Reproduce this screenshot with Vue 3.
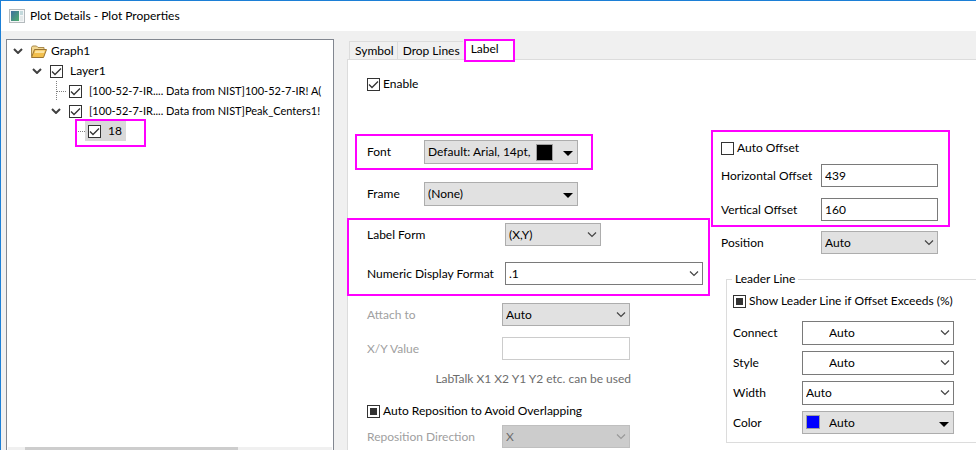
<script setup>
import { ref, onMounted } from 'vue'

const tree = ref([
  { level: 0, label: 'Graph1', open: true, folder: true },
  { level: 1, label: 'Layer1', open: true, checked: true },
  { level: 2, label: '[100-52-7-IR.... Data from NIST]100-52-7-IR! A(', checked: true, branch: true },
  { level: 2, label: '[100-52-7-IR.... Data from NIST]Peak_Centers1!', open: true, checked: true },
  { level: 3, label: '18', checked: true, selected: true },
])

const enabled = ref(true)
const autoOffset = ref(false)
const horizontal = ref('439')
const vertical = ref('160')
const reposition = ref(null)
const leader = ref(null)

onMounted(() => {
  reposition.value.indeterminate = true
  leader.value.indeterminate = true
})
</script>

<template>
  <div class="window">
    <header class="titlebar">
      <svg class="app-icon" width="16" height="14" viewBox="0 0 16 14" aria-hidden="true">
        <defs>
          <linearGradient id="screen" x1="0" y1="0" x2="1" y2="1">
            <stop offset="0" stop-color="#3f6fa0" />
            <stop offset="1" stop-color="#4fae6c" />
          </linearGradient>
        </defs>
        <rect x="0.5" y="0.5" width="15" height="13" fill="#f4f6f7" stroke="#b4babd" />
        <rect x="2" y="2" width="8" height="10" fill="url(#screen)" />
        <rect x="11" y="2" width="3" height="4" fill="#c3d9dc" />
        <rect x="11" y="7" width="3" height="5" fill="#e4e9ea" />
      </svg>
      <h1>Plot Details - Plot Properties</h1>
    </header>

    <main class="body">
      <nav class="tree" aria-label="Plot tree">
        <ul>
          <li
            v-for="(node, i) in tree"
            :key="i"
            class="node"
            :class="['level-' + node.level, { branch: node.branch }]"
          >
            <span class="twisty">
              <button v-if="node.open" type="button" :aria-label="'Collapse ' + node.label">
                <svg width="10" height="6" viewBox="0 0 10 6"><path d="M1 1l4 4 4-4" fill="none" stroke="#404040" stroke-width="2" /></svg>
              </button>
            </span>
            <label class="entry" :class="{ selected: node.selected }">
              <span class="mark">
                <svg v-if="node.folder" width="16" height="13" viewBox="0 0 16 13" aria-hidden="true">
                  <path d="M.5 11.5V2.5l1-1.5h4l1.500 1.500h6V5" fill="#f3d790" stroke="#a98a4c" />
                  <path d="M.5 12.500L3.500 4.500H15.500L12.500 12.500z" fill="#f2bf4c" stroke="#9a7431" />
                  <path d="M4.500 5.500h9.500l-1 2.500H3.700z" fill="#fbe3a0" />
                </svg>
                <input v-else v-model="node.checked" type="checkbox" class="check" />
              </span>
              <span class="name">{{ node.label }}</span>
            </label>
            <span v-if="node.selected" class="callout"></span>
          </li>
        </ul>
        <div class="scroll"><span class="thumb"></span></div>
      </nav>

      <section class="pane">
        <div class="tabs" role="tablist">
          <button type="button" role="tab">Symbol</button>
          <button type="button" role="tab">Drop Lines</button>
          <button type="button" role="tab" class="active marked" aria-selected="true">Label</button>
        </div>

        <div class="sheet">
          <div class="column main">
            <label class="tick enable"><input v-model="enabled" type="checkbox" class="check" />Enable</label>

            <div class="group marked font-group">
              <div class="row">
                <label for="font">Font</label>
                <div class="combo button tall">
                  <select id="font"><option>Default: Arial, 14pt,</option></select>
                  <span class="swatch black"></span>
                  <svg class="arrow" width="10" height="5" viewBox="0 0 10 5"><path d="M0 0h10L5 5z" /></svg>
                </div>
              </div>
            </div>

            <div class="row frame-row">
              <label for="frame">Frame</label>
              <div class="combo button tall">
                <select id="frame"><option>(None)</option></select>
                <svg class="arrow" width="10" height="5" viewBox="0 0 10 5"><path d="M0 0h10L5 5z" /></svg>
              </div>
            </div>

            <div class="group marked form-group">
              <div class="row">
                <label for="form">Label Form</label>
                <div class="combo button short">
                  <select id="form"><option>(X,Y)</option></select>
                  <svg class="chevron" width="10" height="6" viewBox="0 0 10 6"><path d="M1 .5l4 4 4-4" /></svg>
                </div>
              </div>
              <div class="row">
                <label for="format">Numeric Display Format</label>
                <div class="combo wide">
                  <select id="format"><option>.1</option></select>
                  <svg class="chevron" width="10" height="6" viewBox="0 0 10 6"><path d="M1 .5l4 4 4-4" /></svg>
                </div>
              </div>
            </div>

            <div class="attach">
              <div class="row">
                <label for="attach" class="dim">Attach to</label>
                <div class="combo button">
                  <select id="attach"><option>Auto</option></select>
                  <svg class="chevron" width="10" height="6" viewBox="0 0 10 6"><path d="M1 .5l4 4 4-4" /></svg>
                </div>
              </div>
              <div class="row">
                <label for="xy" class="dim">X/Y Value</label>
                <input id="xy" type="text" class="text" disabled />
              </div>
              <p class="hint">LabTalk X1 X2 Y1 Y2 etc. can be used</p>
            </div>

            <label class="tick"><input ref="reposition" type="checkbox" class="check" />Auto Reposition to Avoid Overlapping</label>
            <div class="row direction">
              <label for="direction" class="dim">Reposition Direction</label>
              <div class="combo button off">
                <select id="direction" disabled><option>X</option></select>
                <svg class="chevron" width="10" height="6" viewBox="0 0 10 6"><path d="M1 .5l4 4 4-4" /></svg>
              </div>
            </div>
          </div>

          <div class="column side">
            <div class="group marked offset-group">
              <label class="tick"><input v-model="autoOffset" type="checkbox" class="check" />Auto Offset</label>
              <div class="row">
                <label for="horizontal">Horizontal Offset</label>
                <input id="horizontal" v-model="horizontal" type="text" class="text" />
              </div>
              <div class="row">
                <label for="vertical">Vertical Offset</label>
                <input id="vertical" v-model="vertical" type="text" class="text" />
              </div>
            </div>

            <div class="row position">
              <label for="position">Position</label>
              <div class="combo button">
                <select id="position"><option>Auto</option></select>
                <svg class="chevron" width="10" height="6" viewBox="0 0 10 6"><path d="M1 .5l4 4 4-4" /></svg>
              </div>
            </div>

            <fieldset class="leader">
              <legend>Leader Line</legend>
              <label class="tick"><input ref="leader" type="checkbox" class="check" />Show Leader Line if Offset Exceeds (%)</label>
              <div class="row">
                <label for="connect">Connect</label>
                <div class="combo tall inset">
                  <select id="connect"><option>Auto</option></select>
                  <svg class="chevron" width="10" height="6" viewBox="0 0 10 6"><path d="M1 .5l4 4 4-4" /></svg>
                </div>
              </div>
              <div class="row">
                <label for="style">Style</label>
                <div class="combo tall inset">
                  <select id="style"><option>Auto</option></select>
                  <svg class="chevron" width="10" height="6" viewBox="0 0 10 6"><path d="M1 .5l4 4 4-4" /></svg>
                </div>
              </div>
              <div class="row">
                <label for="width">Width</label>
                <div class="combo tall">
                  <select id="width"><option>Auto</option></select>
                  <svg class="chevron" width="10" height="6" viewBox="0 0 10 6"><path d="M1 .5l4 4 4-4" /></svg>
                </div>
              </div>
              <div class="row">
                <label for="color">Color</label>
                <div class="combo button inset">
                  <select id="color"><option>Auto</option></select>
                  <span class="swatch blue"></span>
                  <svg class="arrow" width="10" height="5" viewBox="0 0 10 5"><path d="M0 0h10L5 5z" /></svg>
                </div>
              </div>
            </fieldset>
          </div>
        </div>
      </section>
    </main>
  </div>
</template>

<style>
body {
  margin: 0;
  overflow: hidden;
}
</style>

<style scoped>
.window {
  box-sizing: border-box;
  display: flex;
  flex-direction: column;
  height: 100vh;
  overflow: hidden;
  border-top: 1px solid #1c7fd6;
  border-left: 1px solid #1c7fd6;
  background: #f0f0f0;
  color: #000;
  font: 12px/16px Lato, "Open Sans", sans-serif;
}
.window *,
.window *::before,
.window *::after {
  box-sizing: border-box;
}
.titlebar {
  display: flex;
  flex: none;
  align-items: center;
  gap: 5px;
  height: 30px;
  padding-left: 8px;
  background: #fff;
}
h1 {
  margin: 0;
  font: inherit;
}
.body {
  display: flex;
  flex: 1;
  gap: 13px;
  min-height: 0;
  padding: 8px 0 0 5px;
}

/* Tree */
.tree {
  display: flex;
  flex: none;
  flex-direction: column;
  width: 328px;
  padding: 1px 1px 0;
  border: 1px solid #828790;
  border-bottom: 0;
  background: #fff;
}
ul {
  flex: 1;
  margin: 0;
  padding: 0;
  list-style: none;
}
.node {
  position: relative;
  display: flex;
  height: 20px;
}
.level-1 { padding-left: 19px; }
.level-2 { padding-left: 38px; }
.level-3 { padding-left: 57px; }
.twisty {
  display: flex;
  flex: none;
  align-items: center;
  justify-content: center;
  width: 20px;
}
.level-3 .twisty::before,
.branch .twisty::before {
  width: 10px;
  margin-left: 10px;
  border-top: 1px dotted #808080;
  content: "";
}
.branch .twisty {
  background: linear-gradient(#808080 50%, transparent 50%) 10px 0 / 1px 2px repeat-y;
}
.twisty button {
  display: flex;
  padding: 0;
  border: 0;
  background: none;
}
.entry {
  display: flex;
  align-items: center;
  min-width: 0;
  padding-right: 4px;
}
.selected {
  background: #d9d9d9;
}
.mark {
  display: flex;
  flex: none;
  width: 23px;
  padding-left: 3px;
}
.name {
  white-space: nowrap;
}
.level-2 .entry {
  padding-right: 0;
  font-size: 11px;
}
.callout {
  position: absolute;
  top: -2px;
  left: 67px;
  width: 71px;
  height: 28px;
  border: 2px solid #f0f;
}
.scroll {
  flex: none;
  height: 3px;
  padding: 0 94px 0 17px;
  background: #f0f0f0;
}
.thumb {
  display: block;
  height: 100%;
  background: #cdcdcd;
}

/* Tabs */
.pane {
  display: flex;
  flex: 1;
  flex-direction: column;
  min-width: 0;
}
.tabs {
  display: flex;
  flex: none;
  align-items: flex-end;
  height: 20px;
  padding-left: 2px;
}
.tabs button {
  height: 18px;
  padding: 0 3px 0 5px;
  border: 1px solid #dcdcdc;
  border-width: 1px 0 0 1px;
  background: #f0f0f0;
  color: inherit;
  font: inherit;
  white-space: nowrap;
}
.tabs .active {
  position: relative;
  align-self: flex-start;
  height: 23px;
  margin-left: 1px;
  padding: 0 14px 3px 5px;
  background: #fff;
}
.marked,
.tabs .marked {
  border: 2px solid #f0f;
}
.sheet {
  display: grid;
  flex: 1;
  grid-template-columns: 363px minmax(0, 1fr);
  gap: 1px;
  min-height: 0;
  border-top: 1px solid #dcdcdc;
  background: #fff;
}
.column {
  min-width: 0;
}
.main {
  padding-top: 16px;
  border-left: 1px solid #dcdcdc;
}
.side {
  padding-top: 70px;
}

/* Rows */
.row {
  display: flex;
  align-items: center;
}
.row label {
  flex: none;
  white-space: nowrap;
}
.tick {
  display: flex;
  align-items: center;
  gap: 3px;
  white-space: nowrap;
}
.main > .tick {
  padding-left: 19px;
}
.dim {
  color: #a0a0a0;
}
.font-group {
  width: 238px;
  margin: 42px 0 0 7px;
  padding: 4px 0 4px 10px;
}
.font-group label,
.frame-row label {
  width: 57px;
}
.font-group .combo,
.frame-row .combo {
  width: 154px;
}
.frame-row {
  padding: 12px 0 12px 19px;
}
.form-group {
  display: grid;
  gap: 16px;
  margin-left: -1px;
  padding: 3px 0 9px 18px;
}
.form-group label {
  width: 138px;
}
.form-group .short {
  width: 96px;
}
.form-group .wide {
  width: 198px;
}
.attach {
  display: grid;
  gap: 11px;
  padding: 7px 0 16px 19px;
}
.attach .row label,
.direction label {
  width: 135px;
}
.attach .combo,
.attach .text,
.direction .combo {
  width: 128px;
}
.hint {
  width: 264px;
  margin: 0;
  color: #6d6d6d;
  text-align: right;
}
.direction {
  padding: 6px 0 0 19px;
}
.offset-group {
  display: grid;
  gap: 11px;
  width: 239px;
  padding: 8px 10px 4px 8px;
}
.offset-group .tick {
  margin-bottom: -3px;
}
.offset-group label,
.position label {
  width: 100px;
}
.offset-group .text,
.position .combo {
  width: 117px;
}
.position {
  padding: 4px 0 0 10px;
}
.leader {
  display: grid;
  gap: 6px;
  min-width: 0;
  margin: 17px -2px 0 15px;
  padding: 6px 0 8px 6px;
  border: 1px solid #dcdcdc;
}
.leader legend {
  margin-left: -1px;
  padding: 0 3px;
}
.leader .tick {
  margin-bottom: 6px;
}
.leader .row label {
  width: 69px;
}
.leader .combo {
  width: 152px;
}

/* Controls */
.check {
  flex: none;
  width: 13px;
  height: 13px;
  margin: 0;
  border: 1px solid #333;
  background: #fff center / 11px 11px no-repeat;
  appearance: none;
}
.check:checked {
  background-image: url("data:image/svg+xml,%3Csvg xmlns='http://www.w3.org/2000/svg' viewBox='0 0 11 11'%3E%3Cpath d='M1 5.500l3 3 6-6' fill='none' stroke='%23333' stroke-width='1.300'/%3E%3C/svg%3E");
}
.check:indeterminate {
  background: linear-gradient(#333, #333) center / 7px 7px no-repeat #fff;
}
.combo {
  position: relative;
  height: 23px;
}
.tall {
  height: 24px;
}
.combo select,
.text {
  width: 100%;
  height: 100%;
  margin: 0;
  padding: 0 20px 0 3px;
  border: 1px solid #7a7a7a;
  border-radius: 0;
  outline: 0;
  background: #fff;
  color: #000;
  font: inherit;
  appearance: none;
}
.text {
  height: 23px;
  padding: 0 3px;
}
.text:disabled {
  border-color: #ccc;
}
.button select {
  border-color: #adadad;
  background: #e1e1e1;
}
.off select {
  border-color: #bfbfbf;
  background: #ccc;
  color: #6d6d6d;
  opacity: 1;
}
.inset select {
  padding-left: 26px;
}
.chevron,
.arrow {
  position: absolute;
  top: 9px;
  right: 4px;
  pointer-events: none;
}
.arrow {
  top: 11px;
  right: 5px;
}
.chevron path {
  fill: none;
  stroke: #444;
  stroke-width: 1.2;
}
.off .chevron path {
  stroke: #999;
}
.swatch {
  position: absolute;
  top: 4px;
  right: 25px;
  width: 17px;
  height: 17px;
  border: 1px solid #a0a0a0;
  pointer-events: none;
}
.black {
  background: #000;
}
.blue {
  right: auto;
  left: 4px;
  width: 14px;
  height: 14px;
  background: #00f;
}
</style>
